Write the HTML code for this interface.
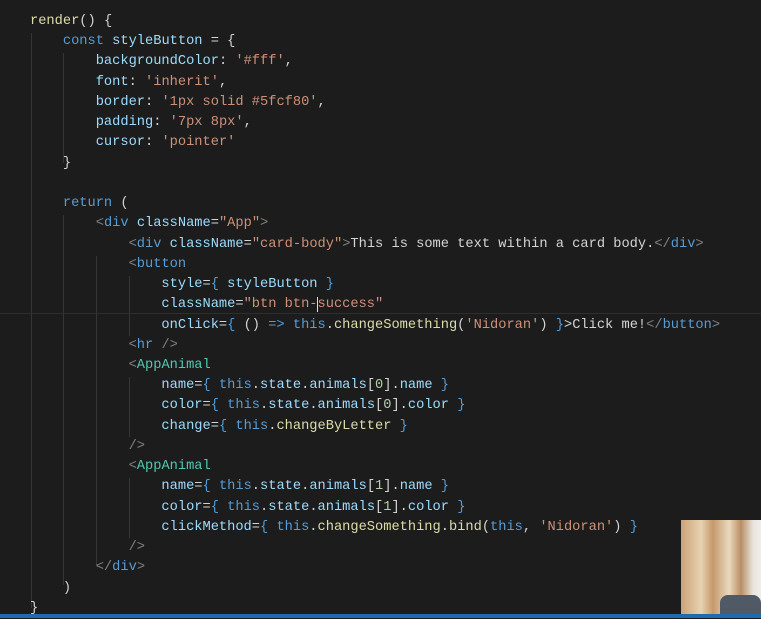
<!DOCTYPE html><html><head><style>
body{margin:0;width:761px;height:618px;background:#1c1c1c;overflow:hidden;position:relative;font-family:"Liberation Mono",monospace;}
pre{margin:0;position:absolute;left:30px;top:12px;font-family:"Liberation Mono",monospace;font-size:13.7px;line-height:20.24px;color:#d4d4d4;}
.k{color:#569cd6}.p{color:#9cdcfe}.s{color:#ce9178}.g{color:#808080}.c{color:#4ec9b0}.f{color:#dcdcaa}.w{color:#d4d4d4}
.guide{position:absolute;width:1px;background:#353535}
</style></head><body>
<div style="position:absolute;left:0;top:313px;width:761px;height:1px;background:#2e2e2e"></div>
<div class="guide" style="left:31px;top:33px;height:575px"></div>
<div class="guide" style="left:63px;top:53px;height:110px"></div>
<div class="guide" style="left:63px;top:215px;height:370px"></div>
<div class="guide" style="left:96px;top:256px;height:310px"></div>
<div class="guide" style="left:129px;top:276px;height:60px"></div>
<div class="guide" style="left:129px;top:377px;height:60px"></div>
<div class="guide" style="left:129px;top:478px;height:60px"></div>
<pre><span class="f">render</span>() {
    <span class="k">const</span> <span class="p">styleButton</span> = {
        <span class="p">backgroundColor</span>: <span class="s">'#fff'</span>,
        <span class="p">font</span>: <span class="s">'inherit'</span>,
        <span class="p">border</span>: <span class="s">'1px solid #5fcf80'</span>,
        <span class="p">padding</span>: <span class="s">'7px 8px'</span>,
        <span class="p">cursor</span>: <span class="s">'pointer'</span>
    }

    <span class="k">return</span> (
        <span class="g">&lt;</span><span class="k">div</span> <span class="p">className</span>=<span class="s">"App"</span><span class="g">&gt;</span>
            <span class="g">&lt;</span><span class="k">div</span> <span class="p">className</span>=<span class="s">"card-body"</span><span class="g">&gt;</span>This is some text within a card body.<span class="g">&lt;/</span><span class="k">div</span><span class="g">&gt;</span>
            <span class="g">&lt;</span><span class="k">button</span>
                <span class="p">style</span>=<span class="k">{</span> <span class="p">styleButton</span> <span class="k">}</span>
                <span class="p">className</span>=<span class="s">"btn btn-<span style="border-left:1px solid #ddd;margin-left:-1px">s</span>uccess"</span>
                <span class="p">onClick</span>=<span class="k">{</span> () <span class="k">=&gt;</span> <span class="k">this</span>.<span class="f">changeSomething</span>(<span class="s">'Nidoran'</span>) <span class="k">}</span>&gt;Click me!<span class="g">&lt;/</span><span class="k">button</span><span class="g">&gt;</span>
            <span class="g">&lt;</span><span class="k">hr</span> <span class="g">/&gt;</span>
            <span class="g">&lt;</span><span class="c">AppAnimal</span>
                <span class="p">name</span>=<span class="k">{</span> <span class="k">this</span>.<span class="p">state</span>.<span class="p">animals</span>[<span style="color:#b5cea8">0</span>].<span class="p">name</span> <span class="k">}</span>
                <span class="p">color</span>=<span class="k">{</span> <span class="k">this</span>.<span class="p">state</span>.<span class="p">animals</span>[<span style="color:#b5cea8">0</span>].<span class="p">color</span> <span class="k">}</span>
                <span class="p">change</span>=<span class="k">{</span> <span class="k">this</span>.<span class="f">changeByLetter</span> <span class="k">}</span>
            <span class="g">/&gt;</span>
            <span class="g">&lt;</span><span class="c">AppAnimal</span>
                <span class="p">name</span>=<span class="k">{</span> <span class="k">this</span>.<span class="p">state</span>.<span class="p">animals</span>[<span style="color:#b5cea8">1</span>].<span class="p">name</span> <span class="k">}</span>
                <span class="p">color</span>=<span class="k">{</span> <span class="k">this</span>.<span class="p">state</span>.<span class="p">animals</span>[<span style="color:#b5cea8">1</span>].<span class="p">color</span> <span class="k">}</span>
                <span class="p">clickMethod</span>=<span class="k">{</span> <span class="k">this</span>.<span class="f">changeSomething</span>.<span class="f">bind</span>(<span class="k">this</span>, <span class="s">'Nidoran'</span>) <span class="k">}</span>
            <span class="g">/&gt;</span>
        <span class="g">&lt;/</span><span class="k">div</span><span class="g">&gt;</span>
    )
}</pre>
<div style="position:absolute;left:681px;top:520px;width:80px;height:95px;background:linear-gradient(90deg,#c9a27a 0%,#e8d2b0 25%,#c49a6c 40%,#ead9bd 60%,#b98f65 75%,#e9e4dc 90%,#f0efec 100%)"></div>
<div style="position:absolute;left:720px;top:595px;width:41px;height:20px;background:#505a66;border-radius:8px 8px 0 0"></div>
<div style="position:absolute;left:0;top:614px;width:761px;height:4px;background:#1f6ab0"></div>
</body></html>
